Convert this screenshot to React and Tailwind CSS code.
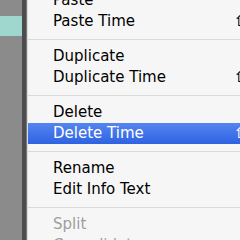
export default function App() {
  const groups = [
    [
      { label: 'Paste' },
      { label: 'Paste Time', key: '⇧⌘V' },
    ],
    [
      { label: 'Duplicate' },
      { label: 'Duplicate Time', key: '⇧⌘D' },
    ],
    [
      { label: 'Delete' },
      { label: 'Delete Time', key: '⇧⌫', active: true },
    ],
    [
      { label: 'Rename' },
      { label: 'Edit Info Text' },
    ],
    [
      { label: 'Split', disabled: true },
      { label: 'Consolidate', disabled: true },
    ],
  ]

  return (
    <div className="w-[240px] h-[240px] overflow-hidden flex bg-[#8b8b8b]" style={{ fontFamily: '"DejaVu Sans", "Liberation Sans", sans-serif' }}>
      {/* fond de la fenêtre derrière le menu */}
      <div className="w-[22px] shrink-0">
        <div className="mt-[16px] h-[20px] bg-[#9fd6ce]" />
      </div>
      <div className="w-[4px] shrink-0 bg-[#4c4c4c]" />
      <div className="w-[1px] shrink-0 bg-[#7a7a7a]" />

      {/* menu contextuel */}
      <div className="w-[320px] shrink-0 bg-[#f6f6f6] border-l border-[#d8d8d8]">
        <div className="mt-[-10px]">
          {groups.map((items, gi) => (
            <div key={gi}>
              {gi > 0 && (
                <div className="h-[14px] flex items-center">
                  <div className="h-px w-full bg-[#dadada]" />
                </div>
              )}
              {items.map((it) => (
                <div
                  key={it.label}
                  className={`h-[21px] flex items-center text-[15px] leading-none pl-[25px] ${
                    it.active
                      ? 'bg-gradient-to-b from-[#5585f0] to-[#2e62e2] text-white'
                      : it.disabled
                        ? 'text-[#9e9e9e]'
                        : 'text-black'
                  }`}
                >
                  <span className="w-[181px] shrink-0">{it.label}</span>
                  {it.key && <span className="font-bold">{it.key}</span>}
                </div>
              ))}
            </div>
          ))}
        </div>
      </div>
    </div>
  )
}
